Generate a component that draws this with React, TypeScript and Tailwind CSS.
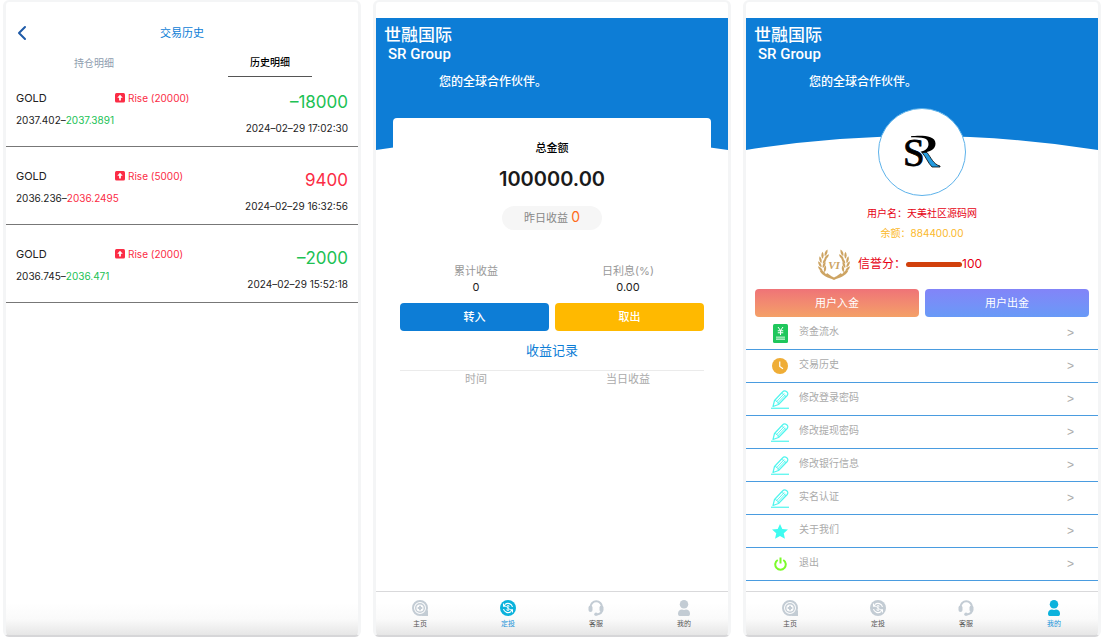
import { ReactNode } from 'react';
import { ChevronLeft } from 'lucide-react';

type TabKey = 'home' | 'invest' | 'service' | 'mine';

interface Trade {
  symbol: string;
  size: number;
  open: string;
  close: string;
  profit: number;
  time: string;
}

const trades: Trade[] = [
  { symbol: 'GOLD', size: 20000, open: '2037.402', close: '2037.3891', profit: -18000, time: '2024–02–29 17:02:30' },
  { symbol: 'GOLD', size: 5000, open: '2036.236', close: '2036.2495', profit: 9400, time: '2024–02–29 16:32:56' },
  { symbol: 'GOLD', size: 2000, open: '2036.745', close: '2036.471', profit: -2000, time: '2024–02–29 15:52:18' },
];

const tabs: { key: TabKey; label: string }[] = [
  { key: 'home', label: '主页' },
  { key: 'invest', label: '定投' },
  { key: 'service', label: '客服' },
  { key: 'mine', label: '我的' },
];

function RiseIcon() {
  return (
    <svg viewBox="0 0 20 20" className="w-[10px] h-[10px]">
      <rect width="20" height="19" rx="3" fill="#fb2c45" />
      <path d="M10 3.5 15.5 9.500h-3.700V15H8.200V9.500H4.500z" fill="#fff" />
    </svg>
  );
}

function TabIcon({ name }: { name: TabKey }) {
  return (
    <svg viewBox="0 0 32 32" className="w-4 h-4" fill="none" stroke="currentColor">
      {name === 'home' && (
        <>
          <circle cx="16" cy="16" r="14" strokeWidth="4" />
          <path d="M18 32h14v-12z" fill="currentColor" stroke="none" />
          <circle cx="16" cy="16" r="8.600" strokeWidth="2.800" />
          <path d="M16 11.500v9M11.500 16h9" strokeWidth="4" />
        </>
      )}
      {name === 'invest' && (
        <>
          <circle cx="16" cy="16" r="16" fill="currentColor" stroke="none" />
          <path d="M7 18a9.200 9.200 0 0 0 15 5M25 14A9.200 9.200 0 0 0 10 9" stroke="#fff" strokeWidth="2.200" />
          <path d="M6 6v7.500h7zM26 26v-7.500h-7z" fill="#fff" stroke="none" />
          <path d="M19 12.500c-1.500-1.400-6-1.400-6 .9s6 2.400 6 4.900-4.500 2.600-6.200 1M16 10v12" stroke="#fff" strokeWidth="1.800" />
        </>
      )}
      {name === 'service' && (
        <>
          <path d="M5 16v-2a11.500 11.500 0 0 1 23 0v6c0 5-3 8-10 9" strokeWidth="4" />
          <rect x="1" y="11" width="8" height="13" rx="4" fill="currentColor" stroke="none" />
          <rect x="23" y="11" width="8" height="13" rx="4" fill="currentColor" stroke="none" />
          <circle cx="16" cy="28.500" r="3.500" fill="currentColor" stroke="none" />
        </>
      )}
      {name === 'mine' && (
        <>
          <circle cx="16" cy="8.500" r="8.500" fill="currentColor" stroke="none" />
          <path d="M4 27c0-5 4-8 8-8 1.500 1 6.500 1 8 0 4 0 8 3 8 8 0 3-1 5-3 5H7c-2 0-3-2-3-5z" fill="currentColor" stroke="none" />
        </>
      )}
    </svg>
  );
}

function FundsIcon() {
  return (
    <svg viewBox="0 0 30 38" className="w-[15px] h-[19px]">
      <rect width="30" height="38" rx="3" fill="#1fc75c" />
      <path d="M10 6l5 7 5-7M15 13v9M9.500 13.500h11M9.500 17.500h11" fill="none" stroke="#fff" strokeWidth="2" />
      <rect x="6" y="25" width="18" height="7" fill="#a9ebc0" />
      <path d="M6 28.500h18" stroke="#1fc75c" />
    </svg>
  );
}

function ClockIcon() {
  return (
    <svg viewBox="0 0 32 32" className="w-4 h-4">
      <circle cx="16" cy="16" r="16" fill="#efad36" />
      <path d="M15.500 7v10l6.500 4.500" fill="none" stroke="#fff" strokeWidth="2.400" />
    </svg>
  );
}

function PencilIcon() {
  return (
    <svg viewBox="0 0 36 38" className="w-[18px] h-[19px]" fill="none" stroke="#4ff5ee" strokeWidth="2.400">
      <path d="M4 33l3-12L23 4c2.500-3 6-2.500 8.500-.5s3 5 .5 8L15 29z" strokeLinejoin="round" />
      <path d="M7 21c4 0 7.500 3 8 8M10.500 24 26.500 7M13 26.500 29 9.500M21 7c4 .5 7 3.500 8 7" strokeWidth="1.800" />
      <path d="M0 36.500h36" />
    </svg>
  );
}

function StarIcon() {
  return (
    <svg viewBox="0 0 32 30" className="w-4 h-[15px]">
      <path d="M16 0l4.600 10 11.400 1.200-8.500 7.400 2.400 11.100L16 24l-9.900 5.700 2.400-11.100L0 11.200 11.400 10z" fill="#3ffbf0" />
    </svg>
  );
}

function PowerIcon() {
  return (
    <svg viewBox="0 0 26 28" className="w-[13px] h-[14px]" fill="none" stroke="#7bfb29" strokeWidth="4">
      <path d="M7.500 6a10.500 10.500 0 1 0 11 0M13 1v12" />
    </svg>
  );
}

function BrandMark() {
  return (
    <svg viewBox="0 0 88 88" className="w-[88px] h-[88px]">
      <circle cx="44" cy="44" r="43.500" fill="#fff" stroke="#5db2ea" />
      <text x="25" y="58" fontFamily="Liberation Serif, serif" fontSize="39" fill="#000" stroke="#000" strokeWidth=".8">S</text>
      <path d="M33 28.200C41 27.500 57.500 26.500 57.500 35.500c0 5.500-5 8.800-13.500 9.200l-1.500-1c5-.7 8-3.700 8-7.700 0-6.500-6-6.500-17.500-6.800z" fill="#000" />
      <path d="M44 44.500h5c4 5 6.500 12 13 13.500v1h-8c-4-4-6-10-10-14.500z" fill="#239be0" stroke="#000" strokeWidth=".8" />
    </svg>
  );
}

// one side of the wreath: x, y and tilt of each leaf, from the tip down
const leaves = [
  [16, 8, 22],
  [9, 13, 0],
  [5, 22, -14],
  [4, 31, -28],
  [5, 40, -42],
  [10, 47, -55],
  [17, 16, 42],
  [13, 24, 32],
  [12, 32, 22],
  [14, 40, 8],
];

function Wreath({ flip }: { flip?: boolean }) {
  return (
    <g transform={flip ? 'translate(64 0) scale(-1 1)' : undefined}>
      {leaves.map(([x, y, angle]) => (
        <path key={`${x}-${y}`} d="M0-7.500C3.200-3 3 3 0 6.500-3 3-3.200-3 0-7.500z" transform={`translate(${x} ${y}) rotate(${angle})`} />
      ))}
      <path d="M3 42c7 8 19 9 29 15v5C21 57 8 55 3 42zM18 48l14 10v4L16 52z" />
    </g>
  );
}

function CreditBadge() {
  return (
    <svg viewBox="0 0 64 62" className="w-8 h-[31px]" fill="#cda463">
      <Wreath />
      <Wreath flip />
      <text x="32" y="40" textAnchor="middle" fontFamily="Liberation Serif, serif" fontSize="22" fontStyle="italic" fontWeight="bold">VI</text>
    </svg>
  );
}

const menu: { label: string; icon: ReactNode }[] = [
  { label: '资金流水', icon: <FundsIcon /> },
  { label: '交易历史', icon: <ClockIcon /> },
  { label: '修改登录密码', icon: <PencilIcon /> },
  { label: '修改提现密码', icon: <PencilIcon /> },
  { label: '修改银行信息', icon: <PencilIcon /> },
  { label: '实名认证', icon: <PencilIcon /> },
  { label: '关于我们', icon: <StarIcon /> },
  { label: '退出', icon: <PowerIcon /> },
];

function Phone({ active, children }: { active?: TabKey; children: ReactNode }) {
  return (
    <section className="flex flex-col min-w-0 rounded-md border-x-[3px] border-y-2 border-[#f4f5f6] border-b-[#d6d6d8] bg-[linear-gradient(to_top,#e6e6e6,#fafafa_16px,#ffffff_32px)]">
      <div className="flex-1">{children}</div>
      {active && (
        <nav className="grid grid-cols-4 h-11 border-t border-[#d9d9db]">
          {tabs.map(tab => (
            <a
              key={tab.key}
              href={`#${tab.key}`}
              className={`flex flex-col items-center gap-1 pt-2 ${tab.key === active ? 'text-[#0bb2dc]' : 'text-[#c3ccd4]'}`}
            >
              <TabIcon name={tab.key} />
              <span className={`text-[7px] leading-[8px] ${tab.key === active ? 'text-[#1492d8]' : 'text-[#555555]'}`}>{tab.label}</span>
            </a>
          ))}
        </nav>
      )}
    </section>
  );
}

function Banner() {
  return (
    <header className="relative mt-4 h-[132px] text-white">
      <svg viewBox="0 0 352 132" preserveAspectRatio="none" className="absolute inset-0 w-full h-full">
        <path d="M0 0H352V132Q176 104 0 132z" fill="#0d7dd6" />
      </svg>
      <div className="relative pt-[5px] pl-2 font-medium">
        <h2 className="text-[17px] leading-6">世融国际</h2>
        <p className="pl-1 font-['Roboto'] text-[15px] leading-[14px]">SR Group</p>
        <p className="pt-3 pl-[55px] text-xs leading-[18px]">您的全球合作伙伴。</p>
      </div>
    </header>
  );
}

function TradeRow({ trade }: { trade: Trade }) {
  const isLoss = trade.profit < 0;
  const color = isLoss ? 'text-[#20c154]' : 'text-[#fb2c45]';

  return (
    <li className="flex justify-between h-[78px] pt-[21px] px-[10px] border-b border-[#777777] text-[#222222]">
      <div>
        <div className="flex items-center">
          <span className="w-[99px] text-[11px] leading-4">{trade.symbol}</span>
          <RiseIcon />
          <span className="pl-[3px] text-[10px] leading-4 text-[#fb2c45]">Rise ({trade.size})</span>
        </div>
        <p className="mt-[6px] text-[10px] leading-4">
          {trade.open}–<span className={color}>{trade.close}</span>
        </p>
      </div>
      <div className="text-right">
        <p className={`text-[17px] leading-6 ${color}`}>
          {isLoss && '–'}
          {Math.abs(trade.profit)}
        </p>
        <p className="mt-[6px] text-[10px] leading-4">{trade.time}</p>
      </div>
    </li>
  );
}

function HistoryScreen() {
  return (
    <Phone>
      <header className="grid grid-cols-[24px_1fr_24px] items-center pt-[19px] px-1">
        <button aria-label="返回" className="text-[#1f5ba8]">
          <ChevronLeft className="w-6 h-6" strokeWidth={2} />
        </button>
        <h1 className="text-center text-[11px] leading-4 text-[#0d7dd6]">交易历史</h1>
      </header>
      <div className="grid grid-cols-2 justify-items-center mt-[9px] text-[10px] leading-4">
        <button className="w-[84px] pb-[6px] text-[#8d9cae]">持仓明细</button>
        <button className="w-[84px] pb-[6px] border-b border-[#555555] font-medium text-black">历史明细</button>
      </div>
      <ul className="-mt-2">
        {trades.map(trade => (
          <TradeRow key={trade.time} trade={trade} />
        ))}
      </ul>
    </Phone>
  );
}

function InvestScreen() {
  return (
    <Phone active="invest">
      <Banner />
      <main className="relative -mt-8 mx-[17px] px-[7px] rounded bg-white text-center">
        <h3 className="pt-[22px] text-[11px] leading-4 font-medium text-black">总金额</h3>
        <p className="mt-2 text-xl leading-[30px] font-semibold text-[#1a1a1a]">100000.00</p>
        <p className="w-[100px] h-6 mx-auto mt-3 rounded-full bg-[#f6f6f6] text-[11px] leading-6 text-[#888888]">
          昨日收益 <span className="text-sm leading-none text-[#ff6b1a]">0</span>
        </p>
        <dl className="grid grid-cols-2 mt-[33px] text-[11px] leading-4">
          <div>
            <dt className="text-[#999999]">累计收益</dt>
            <dd className="text-[#222222]">0</dd>
          </div>
          <div>
            <dt className="text-[#999999]">日利息(%)</dt>
            <dd className="text-[#222222]">0.00</dd>
          </div>
        </dl>
        <div className="grid grid-cols-2 gap-[6px] mt-2 text-[11px] font-medium text-white">
          <button className="h-7 rounded bg-[#0d7dd6]">转入</button>
          <button className="h-7 rounded bg-[#ffb900]">取出</button>
        </div>
        <h3 className="mt-[9px] pb-[10px] text-[13px] leading-5 text-[#0d7dd6]">收益记录</h3>
        <table className="w-full table-fixed border-t border-[#ebebeb] text-[11px] leading-4 text-[#aaaaaa]">
          <thead>
            <tr>
              <th className="p-0 font-normal">时间</th>
              <th className="p-0 font-normal">当日收益</th>
            </tr>
          </thead>
        </table>
      </main>
    </Phone>
  );
}

function ProfileScreen() {
  return (
    <Phone active="mine">
      <Banner />
      <main className="relative -mt-[42px]">
        <div className="flex justify-center">
          <BrandMark />
        </div>
        <p className="mt-[7px] text-center text-[10px] leading-5 text-[#e60012]">用户名：天美社区源码网</p>
        <p className="text-center text-[10px] leading-5 text-[#fbb829]">余额：884400.00</p>
        <div className="flex items-center h-8 mt-[5px] pl-[72px] text-xs text-[#e60012]">
          <CreditBadge />
          <span className="pl-2">信誉分：</span>
          <div role="progressbar" aria-label="信誉分" aria-valuenow={100} className="w-14 h-[5px] rounded-full bg-[#d1400c]" />
          <span>100</span>
        </div>
        <div className="grid grid-cols-2 gap-[6px] mt-[9px] px-[9px] text-[11px] text-white">
          <button className="h-7 rounded bg-linear-to-b from-[#ef7377] to-[#f4a067]">用户入金</button>
          <button className="h-7 rounded bg-linear-to-b from-[#8284f8] to-[#689af7]">用户出金</button>
        </div>
        <ul>
          {menu.map(item => (
            <li key={item.label} className="border-b border-[#4a9ce0]">
              <a href="#mine" className="flex items-center h-8 px-6 text-[10px] text-[#aaaaaa]">
                <span className="flex justify-center w-5">{item.icon}</span>
                <span className="flex-1 pl-[9px] pb-1">{item.label}</span>
                <span className="font-['Liberation_Sans'] text-xs">&gt;</span>
              </a>
            </li>
          ))}
        </ul>
      </main>
    </Phone>
  );
}

export default function App() {
  return (
    <div className="grid grid-cols-3 gap-3 min-h-screen pl-[3px] bg-white font-['Inter','Noto_Sans_CJK_SC',sans-serif]">
      <HistoryScreen />
      <InvestScreen />
      <ProfileScreen />
    </div>
  );
}
